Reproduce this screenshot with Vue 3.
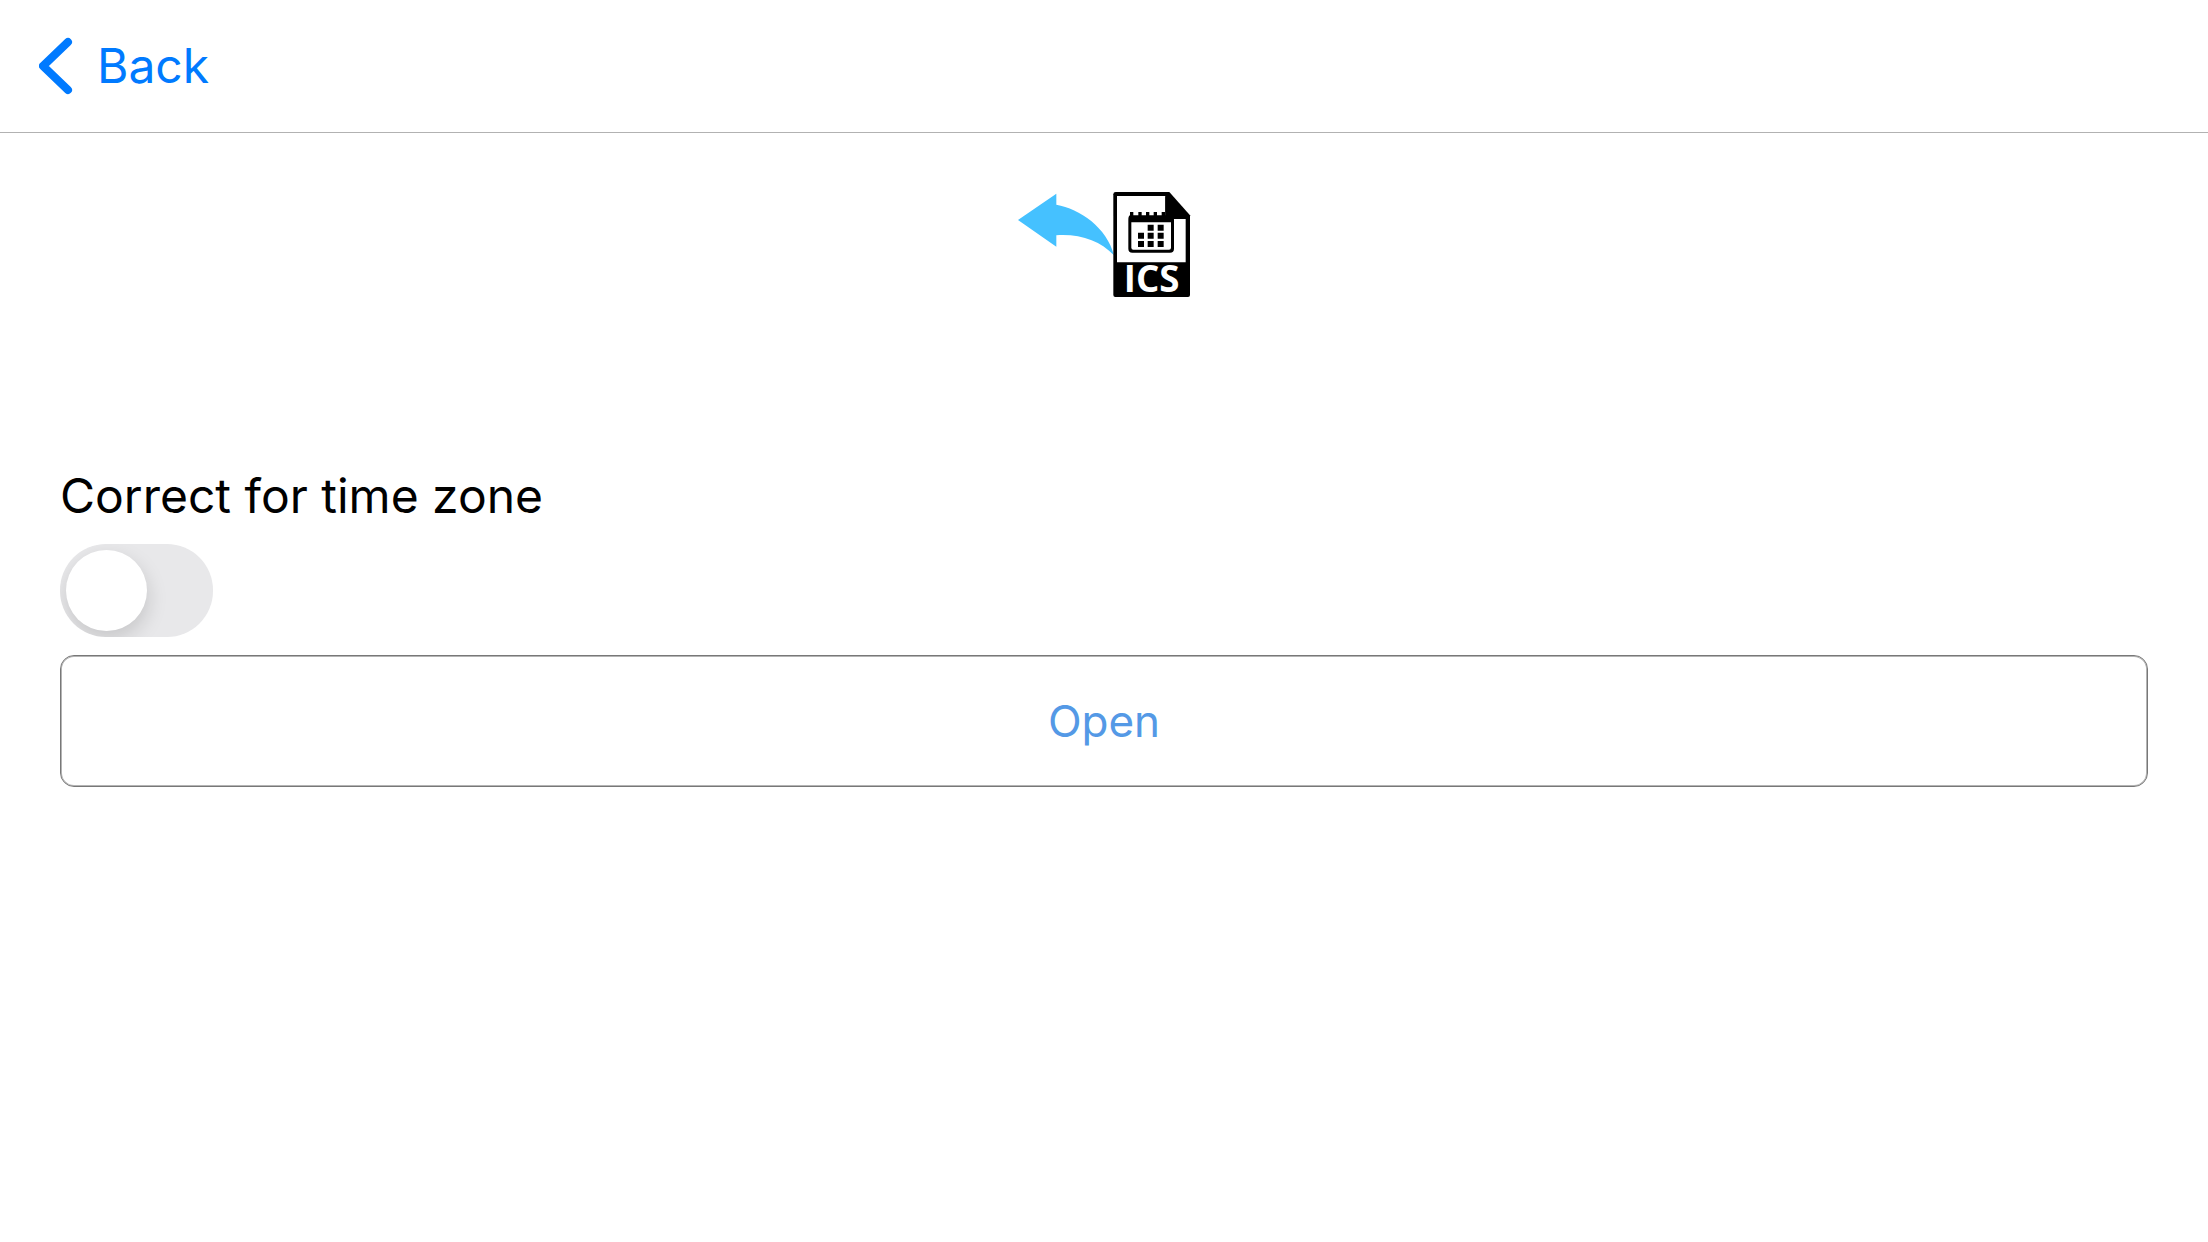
<script setup>
import { ref } from 'vue'

const correctTimeZone = ref(false)
</script>

<template>
  <div class="screen">
    <header class="navbar">
      <button class="back" type="button">
        <svg class="chevron" viewBox="0 0 34 58" aria-hidden="true">
          <path d="M29 5 4 29 29 53" />
        </svg>
        <span>Back</span>
      </button>
    </header>

    <main class="content">
      <svg class="logo" viewBox="54 66 516 318" role="img" aria-label="Open ICS file">
        <path fill="#45c1ff" d="M54 150 169 71V104C239 116 321 172 342 256C301 213 240 191 169 196V230Z" />
        <path d="M347 66H508L570 136V375Q570 381 564 381H346Q340 381 340 375V73Q340 66 347 66Z" />
        <path fill="#fff" d="M351 78H496V147H557V277H351Z" />
        <path d="M390 126H400V136H415V126H425V136H438V126H448V136H461V126H471V136H485V126H495V136H512Q522 138 522 149V236Q522 248 510 248H397Q385 248 385 236V149Q385 138 390 136Z" />
        <path fill="#fff" d="M394 157H513V233Q513 239 507 239H400Q394 239 394 233Z" />
        <path d="M443 164h18v18h-18zM473 164h18v18h-18zM414 188h18v18h-18zM443 188h18v18h-18zM473 188h18v18h-18zM414 213h18v18h-18zM443 213h18v18h-18zM473 213h18v18h-18z" />
        <path d="M496 147V78L557 147Z" />
        <text x="455" y="366" text-anchor="middle">ICS</text>
      </svg>

      <label class="caption" for="time-zone">Correct for time zone</label>
      <input id="time-zone" v-model="correctTimeZone" class="switch" type="checkbox" role="switch">
      <button class="open" type="button">Open</button>
    </main>
  </div>
</template>

<style>
body {
  margin: 0;
  background: #fff;
}
</style>

<style scoped>
.screen {
  font-family: Inter, "Liberation Sans", sans-serif;
  color: #000;
}

.navbar {
  display: flex;
  align-items: center;
  height: 132px;
  padding: 0 39px;
  border-bottom: 1px solid #b2b2b2;
}

.back {
  display: flex;
  align-items: center;
  gap: 24px;
  padding: 0;
  border: 0;
  background: none;
  color: #007aff;
  font: inherit;
  font-size: 48px;
  line-height: 60px;
  cursor: pointer;
}

.chevron {
  width: 34px;
  height: 58px;
  fill: none;
  stroke: currentColor;
  stroke-width: 8;
  stroke-linecap: round;
  stroke-linejoin: round;
}

.content {
  display: flex;
  flex-direction: column;
  align-items: flex-start;
  padding: 59px 60px;
}

.logo {
  align-self: center;
  width: 172px;
  height: 106px;
  margin-bottom: 168px;
  overflow: visible;
}

.logo text {
  fill: #fff;
  font-family: "Open Sans", "Noto Sans", sans-serif;
  font-size: 110px;
  font-weight: 700;
}

.caption {
  font-size: 48px;
  line-height: 60px;
}

.switch {
  appearance: none;
  display: flex;
  align-items: center;
  width: 153px;
  height: 93px;
  margin: 18px 0;
  padding: 0 6px;
  box-sizing: border-box;
  border-radius: 46px;
  background: #e8e8ea;
  overflow: hidden;
  cursor: pointer;
}

.switch::before {
  content: "";
  width: 81px;
  height: 81px;
  border-radius: 50%;
  background: #fff;
  box-shadow: 1px 8px 20px rgba(0, 0, 0, 0.15);
}

.switch:checked {
  justify-content: flex-end;
  background: #34c759;
}

.open {
  align-self: stretch;
  height: 132px;
  padding: 0;
  border: 1px solid #787878;
  border-radius: 14px;
  box-shadow: inset 0 0 0 1px #b4b4b4;
  background: #fff;
  color: #5499e6;
  font: inherit;
  font-size: 44px;
  line-height: 60px;
  cursor: pointer;
}
</style>
